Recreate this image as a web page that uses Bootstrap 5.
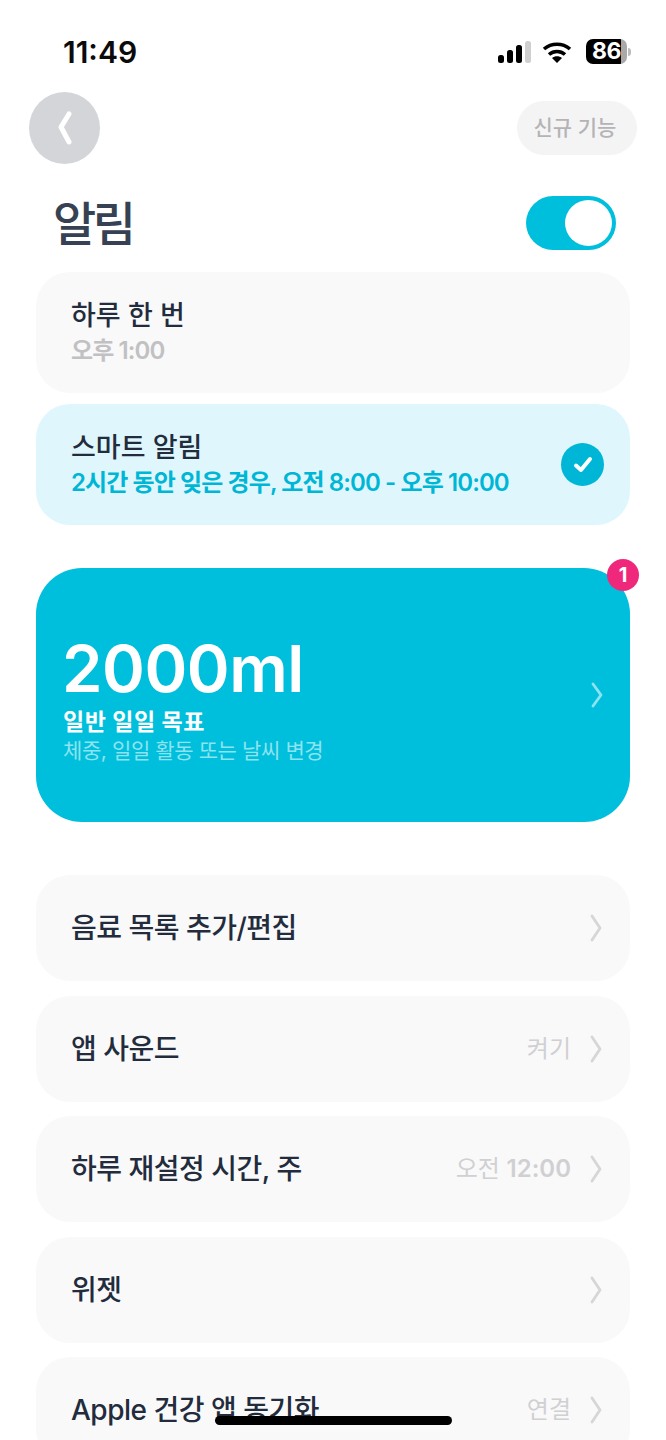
<!DOCTYPE html>
<html lang="ko">
<head>
<meta charset="UTF-8" />
<meta name="viewport" content="width=device-width, initial-scale=1.0" />
<title>알림 설정</title>
<link href="https://cdn.jsdelivr.net/npm/bootstrap@5.3.0/dist/css/bootstrap.min.css" rel="stylesheet" />
<style>
  html, body { height: 1440px; overflow: hidden; }
  body { font-family: "Inter", "Noto Sans CJK KR", sans-serif; background: #fff; color: #222c3c; }
  .screen { position: relative; height: 1440px; overflow: hidden; }
  .status-row { height: 92px; padding: 33px 35px 0 63px; }
  .clock { font-size: 30px; font-weight: 600; line-height: 38px; color: #0b0b0b; }
  .status-icons { margin-top: 6px; gap: 10px; }
  .batt { width: 41px; height: 25px; background: linear-gradient(90deg, #000 85%, #a9a9a9 85%); border-radius: 7px; color: #fff; font-size: 23px; font-weight: 700; line-height: 25px; letter-spacing: -.5px; text-align: center; }
  .batt-end { width: 3px; height: 8px; margin-left: 1px; background: #bdbdbd; border-radius: 0 3px 3px 0; }
  .top-row { height: 72px; padding: 0 29px; }
  .round-back { width: 71px; height: 72px; border-radius: 50%; background: #d3d5d9; }
  .new-pill { height: 54px; width: 120px; border-radius: 27px; background: #f5f4f5; color: #b4b4b6; font-size: 21px; font-weight: 500; padding-right: 4px; }
  .title-row { height: 54px; margin-top: 32px; padding: 0 50px 0 53px; }
  .title-text { font-size: 47px; font-weight: 500; color: #364253; line-height: 54px; letter-spacing: -3.6px; padding-top: 1px; }
  .fake-switch { width: 90px; height: 54px; border-radius: 27px; background: #00bfdc; padding: 4px; }
  .fake-knob { width: 47px; height: 46px; border-radius: 50%; background: #fff; }
  .cards { padding: 0 36px; margin-top: 22px; }
  .alarm-card { height: 121px; border-radius: 34px; padding: 0 26px 0 35px; background: #f9f9fa; margin-bottom: 11px; }
  .alarm-card.on { background: #dff7fc; }
  .alarm-title { font-size: 27px; font-weight: 500; line-height: 36px; color: #222c3c; }
  .alarm-sub { font-size: 24px; font-weight: 600; line-height: 32px; letter-spacing: -.9px; color: #c1c1c3; margin-top: 1px; }
  .on .alarm-sub { color: #00b6d6; }
  .check-dot { width: 43px; height: 43px; border-radius: 50%; background: #00b6d6; }
  .goal-card { position: relative; height: 254px; margin-top: 43px; margin-bottom: 53px; border-radius: 46px; background: #00bfdc; padding: 0 27px; color: #fff; }
  .goal-num { font-size: 65px; font-weight: 600; line-height: 72px; letter-spacing: -.5px; margin-left: -1px; margin-top: 6px; }
  .goal-label { font-size: 23px; font-weight: 700; line-height: 30px; margin-top: 2px; letter-spacing: .5px; }
  .goal-sub { font-size: 21px; line-height: 26px; color: #8fe3f0; letter-spacing: -.4px; margin-top: 1px; }
  .goal-pin { position: absolute; top: -9px; right: -9px; width: 32px; height: 32px; border-radius: 50%; background: #f0287c; font-size: 20px; font-weight: 700; line-height: 32px; text-align: center; }
  .menu-row { height: 106px; border-radius: 34px; background: #f9f9fa; padding: 0 28px 0 35px; margin-bottom: 14.5px; font-size: 28px; font-weight: 500; letter-spacing: -.5px; color: #222c3c; }
  .menu-value { font-size: 24px; font-weight: 400; letter-spacing: 0; color: #d0d0d2; margin-right: 19px; }
  .menu-value b { font-weight: 600; }
  .home-bar { position: absolute; left: 215px; top: 1416px; width: 237px; height: 9px; border-radius: 5px; background: #000; }
</style>
</head>
<body>
<div class="screen">

  <div class="status-row d-flex justify-content-between align-items-start">
    <div class="clock">11:49</div>
    <div class="status-icons d-flex align-items-center">
      <svg width="34" height="22" viewBox="0 0 34 22">
        <rect x="0" y="14" width="6" height="8" rx="2.500" fill="#000"/>
        <rect x="9" y="9" width="6" height="13" rx="2.500" fill="#000"/>
        <rect x="18" y="4" width="6" height="18" rx="2.500" fill="#000"/>
        <rect x="27" y="0" width="6" height="22" rx="2.500" fill="#cfcfcf"/>
      </svg>
      <svg width="30" height="24" viewBox="0 0 30 24" fill="none" stroke="#000" stroke-width="3.600">
        <path d="M2 9c7.400-6.400 18.600-6.400 26 0"/>
        <path d="M7 14.500c4.600-4 11.400-4 16 0"/>
        <path d="M15 23l-5-5c2.800-2.200 7.200-2.200 10 0z" fill="#000" stroke="none"/>
      </svg>
      <div class="d-flex align-items-center ms-1">
        <div class="batt">86</div>
        <div class="batt-end"></div>
      </div>
    </div>
  </div>

  <div class="top-row d-flex justify-content-between align-items-center">
    <div class="round-back d-flex align-items-center justify-content-center">
      <svg width="16" height="34" viewBox="0 0 16 34" fill="none" stroke="#fff" stroke-width="5" stroke-linecap="round" stroke-linejoin="round"><path d="M12 3 4 16l8 15"/></svg>
    </div>
    <div class="new-pill d-flex align-items-center justify-content-center">신규 기능</div>
  </div>

  <div class="title-row d-flex justify-content-between align-items-center">
    <div class="title-text">알림</div>
    <div class="fake-switch d-flex justify-content-end"><div class="fake-knob"></div></div>
  </div>

  <div class="cards">
    <div class="alarm-card d-flex flex-column justify-content-center">
      <div class="alarm-title">하루 한 번</div>
      <div class="alarm-sub">오후 1:00</div>
    </div>
    <div class="alarm-card on d-flex justify-content-between align-items-center">
      <div>
        <div class="alarm-title">스마트 알림</div>
        <div class="alarm-sub">2시간 동안 잊은 경우, 오전 8:00 - 오후 10:00</div>
      </div>
      <div class="check-dot d-flex align-items-center justify-content-center">
        <svg width="20" height="18" viewBox="0 0 20 18" fill="none" stroke="#fff" stroke-width="4" stroke-linecap="round" stroke-linejoin="round"><path d="M3 9.500 8 14 17 3"/></svg>
      </div>
    </div>

    <div class="goal-card d-flex justify-content-between align-items-center">
      <div>
        <div class="goal-num">2000ml</div>
        <div class="goal-label">일반 일일 목표</div>
        <div class="goal-sub">체중, 일일 활동 또는 날씨 변경</div>
      </div>
      <svg width="12" height="26" viewBox="0 0 12 26" fill="none" stroke="#8fe3f0" stroke-width="2.800" stroke-linecap="round" stroke-linejoin="round"><path d="M2 2l8 11L2 24"/></svg>
      <div class="goal-pin">1</div>
    </div>

    <div class="menu-row d-flex align-items-center">
      <div class="me-auto">음료 목록 추가/편집</div>
      <svg width="12" height="28" viewBox="0 0 12 28" fill="none" stroke="#d6d6d8" stroke-width="2.800" stroke-linecap="round" stroke-linejoin="round"><path d="M2 2l8 12L2 26"/></svg>
    </div>
    <div class="menu-row d-flex align-items-center">
      <div class="me-auto">앱 사운드</div>
      <div class="menu-value">켜기</div>
      <svg width="12" height="28" viewBox="0 0 12 28" fill="none" stroke="#d6d6d8" stroke-width="2.800" stroke-linecap="round" stroke-linejoin="round"><path d="M2 2l8 12L2 26"/></svg>
    </div>
    <div class="menu-row d-flex align-items-center">
      <div class="me-auto">하루 재설정 시간, 주</div>
      <div class="menu-value">오전 <b>12:00</b></div>
      <svg width="12" height="28" viewBox="0 0 12 28" fill="none" stroke="#d6d6d8" stroke-width="2.800" stroke-linecap="round" stroke-linejoin="round"><path d="M2 2l8 12L2 26"/></svg>
    </div>
    <div class="menu-row d-flex align-items-center">
      <div class="me-auto">위젯</div>
      <svg width="12" height="28" viewBox="0 0 12 28" fill="none" stroke="#d6d6d8" stroke-width="2.800" stroke-linecap="round" stroke-linejoin="round"><path d="M2 2l8 12L2 26"/></svg>
    </div>
    <div class="menu-row d-flex align-items-center">
      <div class="me-auto">Apple 건강 앱 동기화</div>
      <div class="menu-value">연결</div>
      <svg width="12" height="28" viewBox="0 0 12 28" fill="none" stroke="#d6d6d8" stroke-width="2.800" stroke-linecap="round" stroke-linejoin="round"><path d="M2 2l8 12L2 26"/></svg>
    </div>
  </div>

  <div class="home-bar"></div>
</div>
<script src="https://cdn.jsdelivr.net/npm/bootstrap@5.3.0/dist/js/bootstrap.bundle.min.js"></script>
</body>
</html>
